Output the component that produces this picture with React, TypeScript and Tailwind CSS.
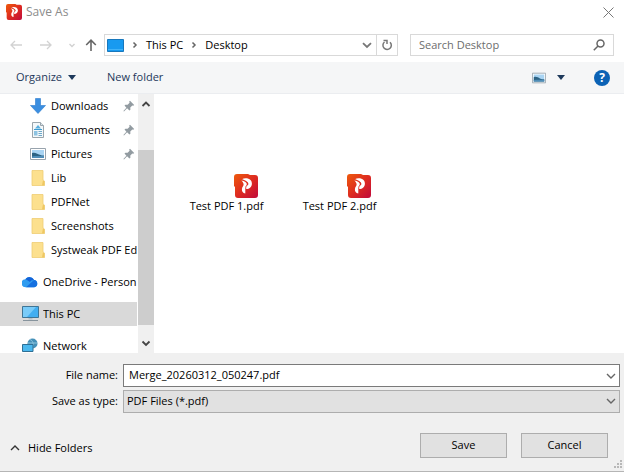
import { useState } from "react";
import type { ReactNode } from "react";
import { clsx } from "clsx";

type Place = {
    name: string;
    icon: ReactNode;
    pinned?: boolean;
};

function AppLogo({ className }: { className?: string }) {
    return (
        <svg viewBox="0 0 24 24" className={className} aria-hidden="true">
            <defs>
                <linearGradient id="logo" x1="0" y1="0" x2="1" y2="1">
                    <stop offset="0" stopColor="#ee5a0c" />
                    <stop offset="0.5" stopColor="#de2c20" />
                    <stop offset="1" stopColor="#c00a3c" />
                </linearGradient>
            </defs>
            <path d="M3 0h11l2 1h5a3 3 0 0 1 3 3v17a3 3 0 0 1-3 3H4a3 3 0 0 1-3-3v-8l-1-1V3a3 3 0 0 1 3-3z" fill="url(#logo)" />
            <path d="M7.800 5.200C12 3.200 17.800 4.800 17.900 9.400c.1 3.500-2.400 5.400-5.700 5.600v-3c1.500-.4 2.300-1.200 2.100-2.500-.3-1.800-2.900-3.100-6.500-4.300z" fill="#fff" />
            <path d="M7.400 6.200c3.200 1 5.600 2.100 5.400 4.200-.2 1.500-1.500 2-1.500 3.900v5.200c-2.400-.4-3.600-2-3.400-4.500.2-2.100 1.800-2.800 1.700-4.700-.1-1.500-1.200-2.800-2.200-4.100z" fill="#fff" />
            <path d="M8 5.600c3.400 1.200 5.800 2.600 5.600 4.500-.1 1-1.500 1.500-1.800 3" fill="none" stroke="#da3026" strokeWidth=".7" />
        </svg>
    );
}

function Chevron({ className, up }: { className?: string; up?: boolean }) {
    return (
        <svg viewBox="0 0 10 10" className={clsx("size-2.5 shrink-0", className)} fill="none" stroke="currentColor" strokeWidth="1.400" aria-hidden="true">
            <path d={up ? "M1 7l4-4 4 4" : "M1 3l4 4 4-4"} />
        </svg>
    );
}

function Crumb() {
    return (
        <svg viewBox="0 0 6 8" className="h-2 w-1.5 shrink-0 text-[#666]" fill="none" stroke="currentColor" strokeWidth="1.500" aria-hidden="true">
            <path d="M1.500 1.500 4 4 1.500 6.500" />
        </svg>
    );
}

function Caret() {
    return (
        <svg viewBox="0 0 8 5" className="h-[5px] w-2" fill="#1e395b" aria-hidden="true">
            <path d="M0 0h8L4 5z" />
        </svg>
    );
}

function DownloadIcon() {
    return (
        <svg viewBox="0 0 16 16" className="size-4" aria-hidden="true">
            <path d="M5.500.5h5v7h5L8 15.500.500 7.500h5z" fill="#3a8ee0" stroke="#2a7bcc" strokeWidth=".6" />
        </svg>
    );
}

function DocumentIcon() {
    return (
        <svg viewBox="0 0 16 16" className="size-4" aria-hidden="true">
            <path d="M2.500.5h8l3 3v12h-11z" fill="#f4f8fa" stroke="#9aa5ac" />
            <path d="M10.500.5v3h3" fill="#dce5ea" stroke="#9aa5ac" />
            <path d="M5 6.500 8 3l3 3.500z" fill="#58aede" />
            <path d="M4 7.500h8" stroke="#3c9bd0" />
            <path d="M4 9h3.500v4.500H4z" fill="#8cc3e2" />
            <path d="M8.500 9.500H12M8.500 11.500H12M8.500 13.500H12" stroke="#6ea9c9" />
        </svg>
    );
}

function PictureIcon({ className }: { className?: string }) {
    return (
        <svg viewBox="0 0 16 12" className={className} aria-hidden="true">
            <path d="M.5.5h15v11H.5z" fill="#fff" stroke="#98a3ad" />
            <path d="M2 2h12v8H2z" fill="#a9d4f3" />
            <path d="M2 5c3-1 5 .5 7 1.500S13 7.500 14 7.500V10H2z" fill="#2d6384" />
            <path d="M2 8.500c4-1 8-.2 12-.5v2H2z" fill="#4f8db8" />
        </svg>
    );
}

function FolderIcon() {
    return (
        <svg viewBox="0 0 16 16" className="size-4" aria-hidden="true">
            <path d="M2 .5h11V11l1.500 1v3.500H2z" fill="#fce08e" />
            <path d="M13 10 14.500 11.500v4h-2.500z" fill="#efc762" />
            <path d="M2 .5h11V10l1.500 1v4.500H2z" fill="none" stroke="#efcd73" strokeWidth=".8" />
        </svg>
    );
}

function OneDriveIcon() {
    return (
        <svg viewBox="0 0 16 12" className="h-3 w-4" aria-hidden="true">
            <path d="M4 11.300a4 4 0 0 1-.6-8.100A5 5 0 0 1 12 4a3.700 3.700 0 0 1 .3 7.300z" fill="#2f9cf0" />
            <path d="M3.400 3.200A5 5 0 0 1 12 4c-2-.2-3.200.8-4 2C6.500 5 5 3.500 3.400 3.200z" fill="#1464d8" />
            <path d="M4 11.300 12 4a3.700 3.700 0 0 1 .3 7.300z" fill="#1570e0" />
        </svg>
    );
}

function ComputerIcon() {
    return (
        <svg viewBox="0 0 17 16" className="h-4 w-[17px]" aria-hidden="true">
            <path d="M.5.5h16v11H.5z" fill="#43aef0" stroke="#3f7595" />
            <path d="M1 1h13L5 11H1z" fill="#79cbf8" />
            <path d="M6.500 12h4v1.500h-4z" fill="#b5c0c8" />
            <path d="M1 14.500h15" stroke="#87949d" />
        </svg>
    );
}

function NetworkIcon() {
    return (
        <svg viewBox="0 0 16 16" className="size-4" aria-hidden="true">
            <circle cx="10.500" cy="5.500" r="5" fill="#4590b8" />
            <path d="M8 1.500c3 1 4 5 2.500 8.500M6 5h9" stroke="#8bc3dc" fill="none" />
            <path d="M.5 6.500h10.500v7H.5z" fill="#4bb8ee" stroke="#2f6f94" />
            <path d="M3 15.500h7" stroke="#87949d" />
        </svg>
    );
}

function PinIcon() {
    return (
        <svg viewBox="0 0 12 12" className="size-3 shrink-0" aria-hidden="true">
            <path d="m7 .8 4.200 4.100-1 .9-.9-.2-2 2 .1 2.200-1 .8-2.300-2.300L1 11.500l-.6-.5 3-3.200L1.500 5.600l.9-.9 2.200.1 2-2-.4-1.200z" fill="#929ba1" />
        </svg>
    );
}

const quickAccess: Place[] = [
    { name: "Downloads", icon: <DownloadIcon />, pinned: true },
    { name: "Documents", icon: <DocumentIcon />, pinned: true },
    { name: "Pictures", icon: <PictureIcon className="h-3 w-4" />, pinned: true },
    { name: "Lib", icon: <FolderIcon /> },
    { name: "PDFNet", icon: <FolderIcon /> },
    { name: "Screenshots", icon: <FolderIcon /> },
    { name: "Systweak PDF Ed", icon: <FolderIcon /> },
];

const roots: Place[] = [
    { name: "OneDrive - Person", icon: <OneDriveIcon /> },
    { name: "This PC", icon: <ComputerIcon /> },
    { name: "Network", icon: <NetworkIcon /> },
];

const files = ["Test PDF 1.pdf", "Test PDF 2.pdf"];

function PlaceRow({ place, root, active, onClick }: { place: Place; root?: boolean; active?: boolean; onClick?: () => void }) {
    return (
        <button
            onClick={onClick}
            className={clsx(
                "flex h-6 w-full shrink-0 items-center gap-1 overflow-hidden text-left",
                root ? "pl-[21px]" : "pl-[29px]",
                active && "bg-[#d9d9d9]"
            )}
        >
            <span className="flex w-[18px] shrink-0 justify-center">{place.icon}</span>
            <span className="flex-1 overflow-hidden whitespace-nowrap">{place.name}</span>
            {place.pinned && <span className="pr-0.5"><PinIcon /></span>}
        </button>
    );
}

export default function App() {
    const [selected, setSelected] = useState("This PC");
    const [fileName, setFileName] = useState("Merge_20260312_050247.pdf");

    return (
        <div className="flex h-screen flex-col overflow-hidden bg-white font-['Open_Sans',sans-serif] text-[11px] text-black">
            <header className="flex h-6 shrink-0 items-center gap-1 pr-2.5 pl-1.5">
                <AppLogo className="size-4" />
                <h1 className="flex-1 text-xs text-[#8c8c8c]">Save As</h1>
                <button aria-label="Close">
                    <svg viewBox="0 0 11 11" className="size-[11px]" stroke="#777" aria-hidden="true">
                        <path d="m.5.5 10 10M10.500.5l-10 10" />
                    </svg>
                </button>
            </header>

            {/* navigation row */}
            <div className="flex h-[38px] shrink-0 items-center pt-1 pr-2.5 pl-2.5">
                <div className="flex w-[94px] shrink-0 items-center">
                    <button aria-label="Back" className="mr-[18px]">
                        <svg viewBox="0 0 12 10" className="h-2.5 w-3" fill="none" stroke="#d2d2d2" strokeWidth="1.300" aria-hidden="true">
                            <path d="M12 5H1M5 1 1 5l4 4" />
                        </svg>
                    </button>
                    <button aria-label="Forward" className="mr-[15px]">
                        <svg viewBox="0 0 12 10" className="h-2.5 w-3" fill="none" stroke="#d2d2d2" strokeWidth="1.300" aria-hidden="true">
                            <path d="M0 5h11M7 1l4 4-4 4" />
                        </svg>
                    </button>
                    <button aria-label="Recent locations" className="mr-2 text-[#d2d2d2]">
                        <svg viewBox="0 0 10 10" className="size-2.5" fill="none" stroke="currentColor" strokeWidth="1.400" aria-hidden="true">
                            <path d="M2.500 4 5 6.500 7.500 4" />
                        </svg>
                    </button>
                    <button aria-label="Up">
                        <svg viewBox="0 0 12 12" className="size-3" fill="none" stroke="#666" strokeWidth="1.600" aria-hidden="true">
                            <path d="M6 12V1.500M1.200 6 6 1.200 10.800 6" />
                        </svg>
                    </button>
                </div>
                <nav className="flex h-[22px] min-w-0 flex-1 items-stretch border border-[#d9d9d9]">
                    <div className="flex flex-1 items-center gap-2 pl-0.5">
                        <svg viewBox="0 0 17 13" className="h-[13px] w-[17px]" aria-hidden="true">
                            <path d="M.5.5h16v12H.5z" fill="#189af0" stroke="#1878bd" />
                            <path d="M1 10.500h15" stroke="#41b3f8" />
                        </svg>
                        <Crumb />
                        <button>This PC</button>
                        <Crumb />
                        <button>Desktop</button>
                    </div>
                    <button aria-label="Previous locations" className="px-1 text-[#777]">
                        <svg viewBox="0 0 10 10" className="size-2.5" fill="none" stroke="currentColor" strokeWidth="1.800" aria-hidden="true">
                            <path d="M1 3.200 5 7l4-3.800" />
                        </svg>
                    </button>
                    <button aria-label="Refresh" className="border-l border-[#d9d9d9] px-1">
                        <svg viewBox="0 0 12 12" className="size-3" fill="none" stroke="#777" strokeWidth="1.500" aria-hidden="true">
                            <path d="M9 3.200A4.200 4.200 0 1 1 3.500 3" />
                            <path d="M2.500 1.500H6V5" />
                        </svg>
                    </button>
                </nav>
                <label className="ml-3 flex h-[22px] w-[34%] max-w-[204px] shrink-0 items-center border border-[#d9d9d9] pr-2 pl-2">
                    <input
                        type="text"
                        aria-label="Search Desktop"
                        placeholder="Search Desktop"
                        className="min-w-0 flex-1 outline-none placeholder:text-[#6d6d6d]"
                    />
                    <svg viewBox="0 0 12 12" className="size-3" fill="none" stroke="#666" strokeWidth="1.500" aria-hidden="true">
                        <circle cx="7.500" cy="4.500" r="3.500" />
                        <path d="M5 7 .8 11.200" />
                    </svg>
                </label>
            </div>

            {/* toolbar */}
            <div className="flex h-8 shrink-0 items-center border-b border-[#ebedf0] bg-[#f5f6f7] pr-3.5 pl-4 text-[#1e395b]">
                <button className="flex items-center gap-1.5">
                    Organize <Caret />
                </button>
                <button className="ml-[31px]">New folder</button>
                <button aria-label="Change view" className="ml-auto">
                    <PictureIcon className="h-3 w-3.5" />
                </button>
                <button aria-label="More views" className="ml-[11px]">
                    <Caret />
                </button>
                <button
                    aria-label="Help"
                    className="ml-[29px] flex size-4 items-center justify-center rounded-full bg-[#0b62b5] text-xs font-bold text-white"
                >
                    ?
                </button>
            </div>

            <div className="flex min-h-0 flex-1">
                <aside className="flex w-[138px] shrink-0 flex-col overflow-hidden pr-px">
                    {quickAccess.map((place) => (
                        <PlaceRow key={place.name} place={place} />
                    ))}
                    <div className="mt-2 flex flex-col gap-2">
                        {roots.map((place) => (
                            <PlaceRow
                                key={place.name}
                                place={place}
                                root
                                active={selected === place.name}
                                onClick={() => setSelected(place.name)}
                            />
                        ))}
                    </div>
                </aside>
                <div className="flex w-4 shrink-0 flex-col items-center bg-[#f0f0f0] text-[#444]">
                    <button aria-label="Scroll up" className="flex h-5 items-center">
                        <svg viewBox="0 0 10 10" className="size-2.5" fill="none" stroke="currentColor" strokeWidth="1.800" aria-hidden="true">
                            <path d="M1.500 7 5 3.500 8.500 7" />
                        </svg>
                    </button>
                    <div className="mt-9 w-full flex-1 bg-[#cdcdcd]" />
                    <button aria-label="Scroll down" className="mt-2 flex h-5 items-center">
                        <svg viewBox="0 0 10 10" className="size-2.5" fill="none" stroke="currentColor" strokeWidth="1.800" aria-hidden="true">
                            <path d="M1.500 3.500 5 7l3.500-3.500" />
                        </svg>
                    </button>
                </div>
                <main className="flex flex-1 items-start gap-[38px] overflow-hidden pt-20 pl-[35px]">
                    {files.map((file) => (
                        <button key={file} className="flex w-[75px] flex-col whitespace-nowrap" onClick={() => setFileName(file)}>
                            <AppLogo className="mr-1.5 size-6 self-end" />
                            <span className="leading-4">{file}</span>
                        </button>
                    ))}
                </main>
            </div>

            <footer className="shrink-0 border-b border-[#b5b5b5] bg-[#f0f0f0] pt-[11px]">
                <div className="grid grid-cols-[118px_1fr] items-center gap-x-[5px] gap-y-[3px] pr-1">
                    <label htmlFor="file-name" className="text-right">File name:</label>
                    <div className="flex h-[23px] items-center border border-[#7a7a7a] bg-white pr-[3px] pl-[5px]">
                        <input
                            id="file-name"
                            type="text"
                            value={fileName}
                            onChange={(e) => setFileName(e.target.value)}
                            className="min-w-0 flex-1 outline-none"
                        />
                        <Chevron className="text-[#666]" />
                    </div>
                    <label htmlFor="file-type" className="text-right">Save as type:</label>
                    <div className="relative">
                        <select
                            id="file-type"
                            className="block h-[23px] w-full appearance-none border border-[#adadad] bg-[#e1e1e1] pl-[3px] outline-none"
                        >
                            <option>PDF Files (*.pdf)</option>
                        </select>
                        <Chevron className="pointer-events-none absolute top-1.5 right-1 text-[#666]" />
                    </div>
                </div>
                <div className="mt-5 flex h-[38px] items-start pr-4 pl-2.5">
                    <button className="flex h-[30px] items-center gap-2">
                        <Chevron up className="text-[#333]" />
                        Hide Folders
                    </button>
                    <button className="ml-auto h-[25px] w-[87px] border border-[#adadad] bg-[#e1e1e1]">Save</button>
                    <button className="ml-3.5 h-[25px] w-[87px] border border-[#adadad] bg-[#e1e1e1]">Cancel</button>
                </div>
            </footer>

            {/* resize grip */}
            <svg viewBox="0 0 8 8" className="absolute right-0.5 bottom-1 size-2" fill="#b8b8b8" aria-hidden="true">
                <path d="M6 0h2v2H6zM3 3h2v2H3zM6 3h2v2H6zM0 6h2v2H0zM3 6h2v2H3zM6 6h2v2H6z" />
            </svg>
        </div>
    );
}
